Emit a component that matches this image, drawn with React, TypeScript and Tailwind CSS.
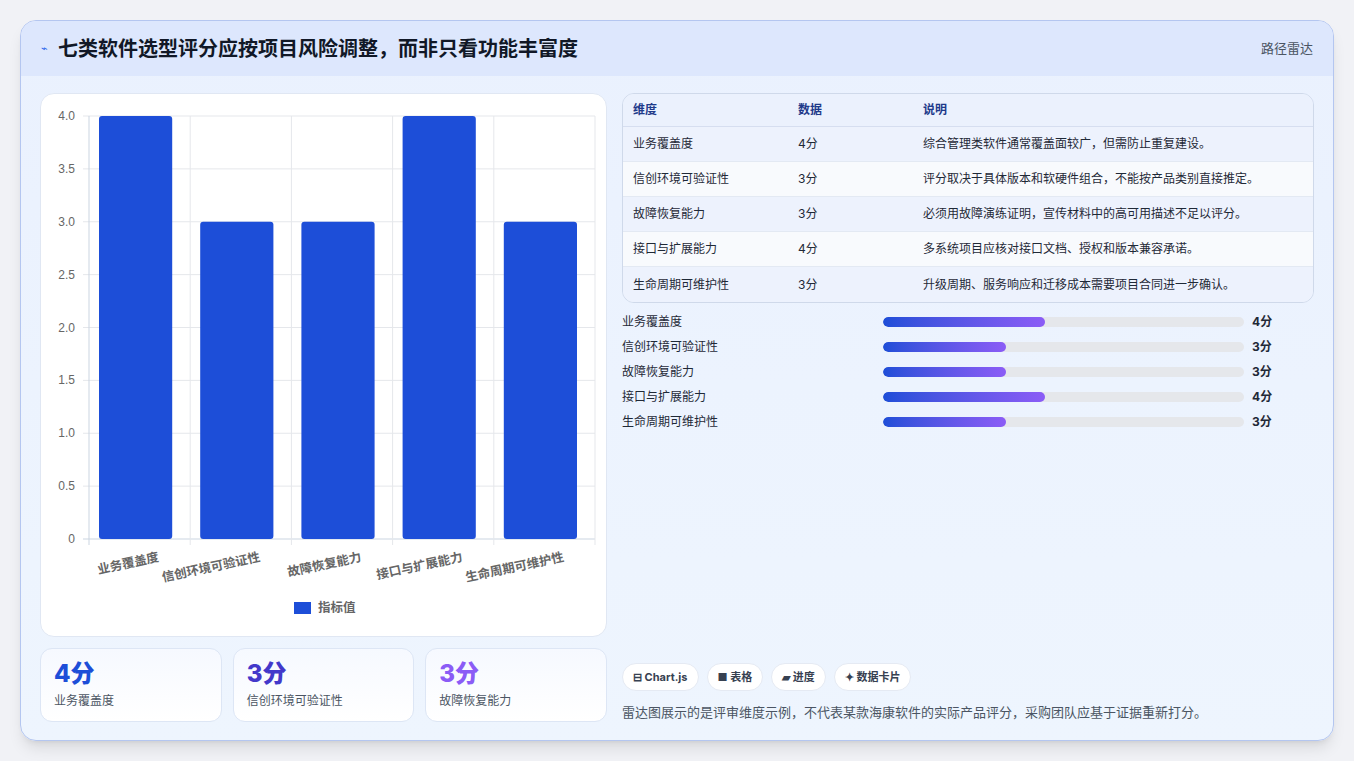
import React from "react";

const cats = ["业务覆盖度", "信创环境可验证性", "故障恢复能力", "接口与扩展能力", "生命周期可维护性"];
const vals = [4, 3, 3, 4, 3];
const notes = [
  "综合管理类软件通常覆盖面较广，但需防止重复建设。",
  "评分取决于具体版本和软硬件组合，不能按产品类别直接推定。",
  "必须用故障演练证明，宣传材料中的高可用描述不足以评分。",
  "多系统项目应核对接口文档、授权和版本兼容承诺。",
  "升级周期、服务响应和迁移成本需要项目合同进一步确认。",
];

function Chart() {
  const x0 = 48, x1 = 554, yTop = 22, yBot = 445;
  const h = yBot - yTop;
  const w = (x1 - x0) / 5;
  const ticks = [0, 0.5, 1, 1.5, 2, 2.5, 3, 3.5, 4];
  return (
    <svg width="566" height="543" className="block">
      {ticks.map((t) => {
        const y = yBot - (t / 4) * h;
        return (
          <g key={t}>
            <line x1={x0 - 6} x2={x1} y1={y} y2={y} stroke={t === 0 ? "#cbd5e1" : "#e5e7eb"} />
            <text x={x0 - 14} y={y + 4} textAnchor="end" fontSize="12" fill="#666" fontFamily="Liberation Sans, sans-serif">
              {t === 0 ? "0" : t.toFixed(1)}
            </text>
          </g>
        );
      })}
      {[0, 1, 2, 3, 4, 5].map((i) => (
        <line key={i} x1={x0 + i * w} x2={x0 + i * w} y1={yTop} y2={yBot + 6} stroke={i === 0 ? "#cbd5e1" : "#e5e7eb"} />
      ))}
      {vals.map((v, i) => {
        const bh = (v / 4) * h;
        return <rect key={i} x={x0 + i * w + 10} y={yBot - bh} width={w - 28} height={bh} rx="3" fill="#1d4ed8" />;
      })}
      {cats.map((c, i) => {
        const cx = x0 + i * w + w / 2 + 20;
        return (
          <text key={c} x={cx} y={yBot + 22} textAnchor="end" fontSize="12.5" fontWeight="bold" fill="#666"
            transform={`rotate(-12 ${cx} ${yBot + 22})`} fontFamily="Noto Sans CJK SC, sans-serif">
            {c}
          </text>
        );
      })}
      <rect x="253" y="508" width="17" height="12" fill="#1d4ed8" />
      <text x="277" y="518" fontSize="12.5" fontWeight="bold" fill="#666" fontFamily="Noto Sans CJK SC, sans-serif">指标值</text>
    </svg>
  );
}

export default function App() {
  const stats = [
    { v: "4分", l: "业务覆盖度", c: "text-[#1d4ed8]" },
    { v: "3分", l: "信创环境可验证性", c: "text-[#4338ca]" },
    { v: "3分", l: "故障恢复能力", c: "text-[#8b5cf6]" },
  ];
  return (
    <div className="w-[1354px] h-[761px] bg-[#f1f2f6] pt-[20px] pl-[20px]" style={{ fontFamily: "Inter, 'Noto Sans CJK SC', sans-serif" }}>
      <div className="w-[1314px] h-[721px] rounded-[16px] border border-[#b4c6f0] overflow-hidden bg-gradient-to-b from-[#eaf1fe] to-[#eef5fe] shadow-lg flex flex-col">
        <div className="h-[55px] bg-[#dde7fd] flex items-center justify-between px-[20px] shrink-0">
          <div className="flex items-center gap-[10px]">
            <span className="text-[#2563eb] text-[11px]">⌁</span>
            <span className="text-[20px] font-bold text-[#111827]">七类软件选型评分应按项目风险调整，而非只看功能丰富度</span>
          </div>
          <span className="text-[13px] text-[#4b5563]">路径雷达</span>
        </div>
        <div className="flex gap-[15px] px-[19px] pt-[17px]">
          <div className="w-[567px] flex flex-col gap-[11px]">
            <div className="h-[544px] bg-white rounded-[14px] border border-[#e0e7f3]">
              <Chart />
            </div>
            <div className="grid grid-cols-3 gap-[11px]">
              {stats.map((s) => (
                <div key={s.l} className="h-[74px] rounded-[12px] border border-[#dde6f5] bg-gradient-to-b from-[#f6f9ff] to-white px-[13px] pt-[10px]">
                  <div className={`text-[24px] font-extrabold leading-[30px] ${s.c}`}>{s.v}</div>
                  <div className="text-[12px] text-[#4b5563] mt-[3px]">{s.l}</div>
                </div>
              ))}
            </div>
          </div>
          <div className="flex-1 flex flex-col">
            <div className="rounded-[12px] border border-[#cfd9ea] overflow-hidden text-[12px] text-[#1f2937]">
              <div className="flex h-[33px] items-center bg-[#ebf1fd] border-b border-[#d6def0] font-bold text-[#1e3a8a]">
                <div className="w-[175px] pl-[10px]">维度</div>
                <div className="w-[125px]">数据</div>
                <div>说明</div>
              </div>
              {cats.map((c, i) => (
                <div key={c} className={`flex h-[35px] items-center ${i < 4 ? "border-b border-[#e3e9f3]" : ""} ${i % 2 === 0 ? "bg-[#edf2fd]" : "bg-[#f8fafd]"}`}>
                  <div className="w-[175px] pl-[10px]">{c}</div>
                  <div className="w-[125px]">{vals[i]}分</div>
                  <div>{notes[i]}</div>
                </div>
              ))}
            </div>
            <div className="flex flex-col gap-[11px] mt-[12px] text-[12px] text-[#1f2937]">
              {cats.map((c, i) => (
                <div key={c} className="flex items-center h-[14px]">
                  <div className="w-[261px]">{c}</div>
                  <div className="w-[361px] h-[10px] rounded-full bg-[#e5e7eb] overflow-hidden">
                    <div className="h-full rounded-full bg-gradient-to-r from-[#1d4ed8] to-[#8b5cf6]" style={{ width: vals[i] === 4 ? "45%" : "34%" }} />
                  </div>
                  <div className="ml-[8px] font-bold">{vals[i]}分</div>
                </div>
              ))}
            </div>
            <div className="flex gap-[8px] mt-[234px] text-[11px] font-bold text-[#374151]">
              {["⊟ Chart.js", "■ 表格", "▰ 进度", "✦ 数据卡片"].map((t) => (
                <span key={t} className="h-[28px] px-[10px] flex items-center rounded-full bg-white border border-[#e5eaf3]">{t}</span>
              ))}
            </div>
            <div className="mt-[12px] text-[13px] text-[#4b5563]">雷达图展示的是评审维度示例，不代表某款海康软件的实际产品评分，采购团队应基于证据重新打分。</div>
          </div>
        </div>
      </div>
    </div>
  );
}
